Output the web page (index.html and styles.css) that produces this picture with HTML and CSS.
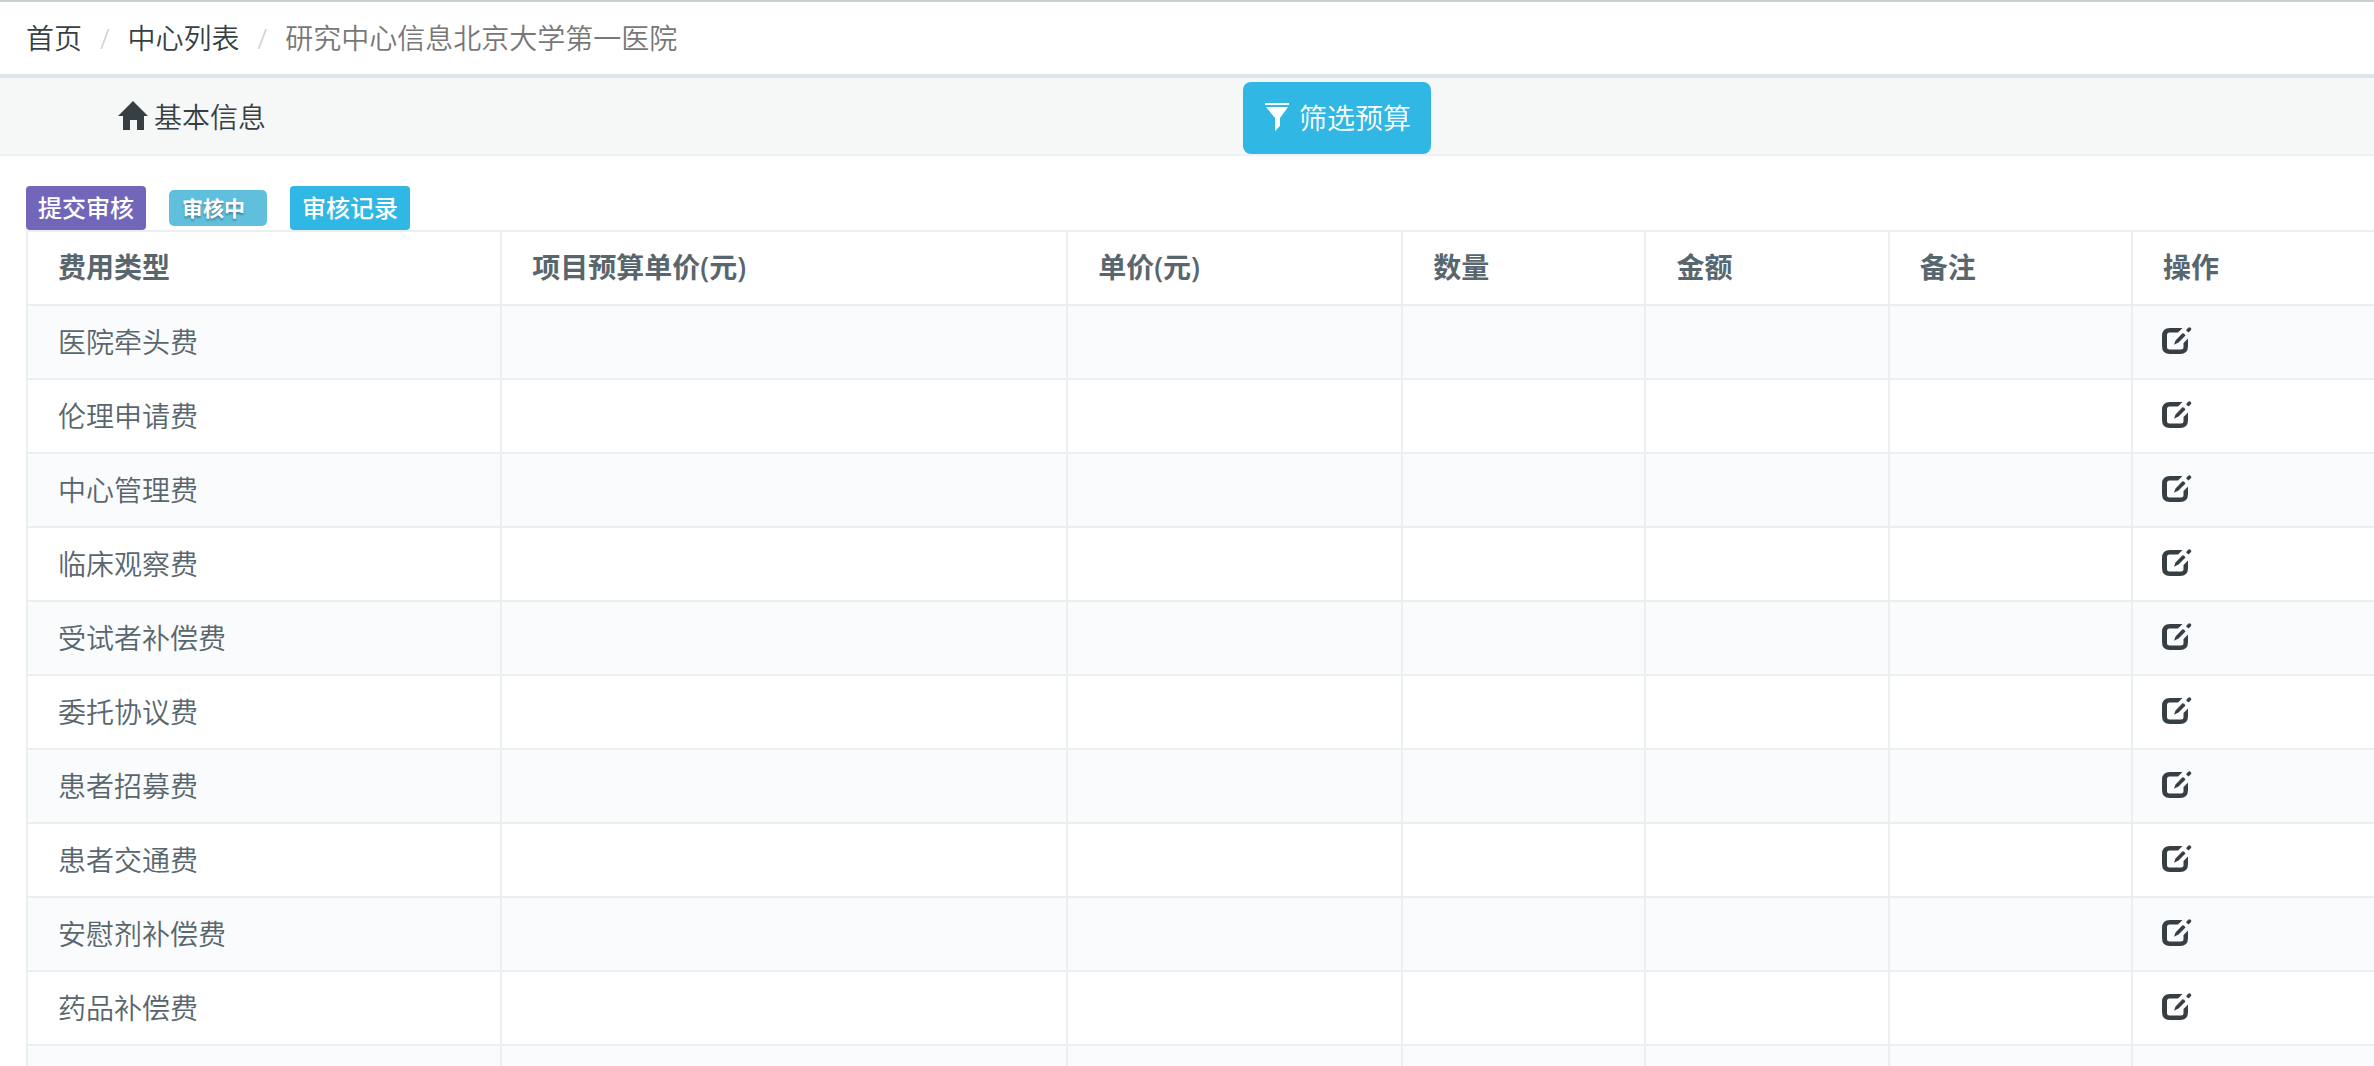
FILE: index.html
```html
<!DOCTYPE html>
<html lang="zh-CN">
<head>
<meta charset="utf-8">
<title>研究中心信息</title>
<link rel="stylesheet" href="styles.css">
</head>
<body>
<svg class="sprite" aria-hidden="true">
  <symbol id="icon-edit" viewBox="0 0 30 28">
    <path d="M20.500 1H8Q0 1 0 9v10q0 8 8 8h10q8 0 8-8v-7.500l-4.500 4.500v4q0 2.500-2.500 2.500H7.500Q5 22.500 5 20V8q0-2.500 2.500-2.500H16z"/>
    <path d="M12 17.800L13.500 13.500 20.500 6.300Q22 6 23.500 8.600L16.500 15.600zM24 3.200L26.200.8Q27.500-.3 28.700 1T28.600 3.500L26.500 5.600z"/>
  </symbol>
</svg>
<nav aria-label="导航路径">
  <ol class="breadcrumb">
    <li><a href="#">首页</a></li>
    <li><a href="#">中心列表</a></li>
    <li class="current">研究中心信息北京大学第一医院</li>
  </ol>
</nav>
<div class="tabs">
  <div class="tab-cell">
    <a class="tab" href="#"><svg class="icon-home" viewBox="0 0 30 30" aria-hidden="true"><path d="M15 0l15 15h-4v14h-7v-10h-7v10H5V15H0z"/></svg>基本信息</a>
  </div>
  <div class="tab-cell">
    <button class="filter" type="button"><svg class="icon-filter" viewBox="0 0 24 28" aria-hidden="true"><path d="M0 0h24v2H0zM1 4h22l-8 11v8l-5 5V15z"/></svg>筛选预算</button>
  </div>
</div>
<main class="content">
  <div class="actions">
    <button class="action submit" type="button">提交审核</button>
    <span class="status">审核中</span>
    <button class="action" type="button">审核记录</button>
  </div>
  <table class="budget">
    <colgroup><col class="c-type"><col class="c-plan"><col class="c-price"><col class="c-small"><col class="c-small"><col class="c-small"><col></colgroup>
    <thead><tr><th>费用类型</th><th>项目预算单价(元)</th><th>单价(元)</th><th>数量</th><th>金额</th><th>备注</th><th>操作</th></tr></thead>
    <tbody>
      <tr><td>医院牵头费</td><td></td><td></td><td></td><td></td><td></td><td><a href="#" aria-label="编辑"><svg class="icon-edit"><use href="#icon-edit"/></svg></a></td></tr>
      <tr><td>伦理申请费</td><td></td><td></td><td></td><td></td><td></td><td><a href="#" aria-label="编辑"><svg class="icon-edit"><use href="#icon-edit"/></svg></a></td></tr>
      <tr><td>中心管理费</td><td></td><td></td><td></td><td></td><td></td><td><a href="#" aria-label="编辑"><svg class="icon-edit"><use href="#icon-edit"/></svg></a></td></tr>
      <tr><td>临床观察费</td><td></td><td></td><td></td><td></td><td></td><td><a href="#" aria-label="编辑"><svg class="icon-edit"><use href="#icon-edit"/></svg></a></td></tr>
      <tr><td>受试者补偿费</td><td></td><td></td><td></td><td></td><td></td><td><a href="#" aria-label="编辑"><svg class="icon-edit"><use href="#icon-edit"/></svg></a></td></tr>
      <tr><td>委托协议费</td><td></td><td></td><td></td><td></td><td></td><td><a href="#" aria-label="编辑"><svg class="icon-edit"><use href="#icon-edit"/></svg></a></td></tr>
      <tr><td>患者招募费</td><td></td><td></td><td></td><td></td><td></td><td><a href="#" aria-label="编辑"><svg class="icon-edit"><use href="#icon-edit"/></svg></a></td></tr>
      <tr><td>患者交通费</td><td></td><td></td><td></td><td></td><td></td><td><a href="#" aria-label="编辑"><svg class="icon-edit"><use href="#icon-edit"/></svg></a></td></tr>
      <tr><td>安慰剂补偿费</td><td></td><td></td><td></td><td></td><td></td><td><a href="#" aria-label="编辑"><svg class="icon-edit"><use href="#icon-edit"/></svg></a></td></tr>
      <tr><td>药品补偿费</td><td></td><td></td><td></td><td></td><td></td><td><a href="#" aria-label="编辑"><svg class="icon-edit"><use href="#icon-edit"/></svg></a></td></tr>
      <tr><td></td><td></td><td></td><td></td><td></td><td></td><td></td></tr>
    </tbody>
  </table>
</main>
</body>
</html>
```
FILE: styles.css
```css
* { box-sizing: border-box; }
body {
  margin: 0;
  background: #fff;
  color: #58666e;
  font: 350 28px/40px "Noto Sans CJK SC", sans-serif;
}
html { scrollbar-width: none; }
a { color: #363f44; text-decoration: none; }
button { border: 0; font: inherit; color: #fff; cursor: pointer; }
svg { fill: currentColor; }
.sprite { display: none; }
.breadcrumb {
  display: flex;
  margin: 0;
  padding: 15px 26px 17px;
  list-style: none;
  border-top: 2px solid #c8cfd3;
  border-bottom: 4px solid #dde6e9;
}
.breadcrumb li + li::before {
  content: "/";
  padding: 0 18px;
  color: #ccc;
  font-family: "Open Sans", sans-serif;
  line-height: 28px;
}
.breadcrumb .current { color: #777; }
.tabs {
  display: flex;
  height: 78px;
  background: #f6f8f8;
  border-bottom: 2px solid #edf1f2;
}
.tab-cell { width: 50%; display: flex; align-items: center; padding: 4px 56px 0; }
.tab-cell:first-child { padding: 0 56px 0 118px; }
.tab, .filter { display: flex; align-items: center; }
.icon-home { width: 30px; height: 30px; margin-right: 6px; }
.filter {
  height: 72px;
  padding: 0 20px 3px 22px;
  background: #31b7e4;
  border-radius: 8px;
}
.icon-filter { width: 24px; height: 28px; margin-right: 10px; }
.content { padding: 30px 0 0 26px; }
.actions { display: flex; align-items: center; gap: 23px; }
.action {
  height: 44px;
  padding: 0 12px 2px;
  border-radius: 4px;
  background: #31b7e4;
  font-size: 24px;
  font-weight: 500;
}
.submit { background: #7266ba; }
.status {
  height: 36px;
  padding: 0 22px 0 13px;
  border-radius: 5px;
  background: #60bfdc;
  color: #fff;
  font-size: 21px;
  font-weight: 700;
  line-height: 34px;
  text-shadow: 0 2px 2px rgba(0, 0, 0, .3);
}
.budget { width: 100%; table-layout: fixed; border-collapse: separate; border-spacing: 0; border-top: 2px solid #eaeff0; }
.budget th, .budget td {
  height: 74px;
  padding: 15px 30px 17px;
  border-left: 2px solid #eaeff0;
  border-bottom: 2px solid #eaeff0;
  text-align: left;
}
.budget th { font-family: "Open Sans", "Noto Sans CJK SC", sans-serif; font-weight: 600; }
.budget tbody tr:nth-child(odd) { background: #fafbfc; }
.c-type { width: 20.2%; }
.c-plan { width: 24.1%; }
.c-price { width: 14.27%; }
.c-small { width: 10.36%; }
.budget td:last-child { padding-left: 29px; }
.icon-edit { display: block; width: 30px; height: 28px; }
```
